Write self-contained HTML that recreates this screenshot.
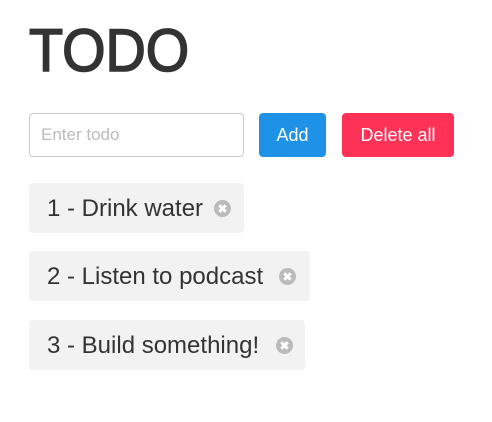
<!DOCTYPE html>
<html><head><style>
body{margin:0;background:#fff;font-family:"Liberation Sans",sans-serif;width:492px;height:422px;position:relative;overflow:hidden}
h1{position:absolute;left:29px;top:18px;margin:0;font-size:60px;font-weight:normal;-webkit-text-stroke:1.6px #333;color:#333;line-height:66px;transform:scaleX(0.93);transform-origin:0 0}
.in{position:absolute;left:29px;top:113px;width:213px;height:42px;border:1px solid #ccc;border-radius:4px;box-sizing:content-box}
.in span{position:absolute;left:11px;top:11px;font-size:17px;color:#bbb}
.btn{position:absolute;top:113px;height:44px;border-radius:4px;color:#fff;font-size:18px;line-height:44px;text-align:center}
.item{position:absolute;left:29px;height:50px;background:#f2f2f2;border-radius:4px;font-size:24px;color:#333;line-height:51px;padding-left:18px;box-sizing:border-box;white-space:nowrap}
.x{position:absolute;top:17px;width:17px;height:17px;border-radius:50%;background:#bbb}
.x:before,.x:after{content:"";position:absolute;left:4px;top:7px;width:9px;height:3px;background:#fff;transform:rotate(45deg)}
.x:after{transform:rotate(-45deg)}
</style></head><body>
<h1>TODO</h1>
<div class="in"><span>Enter todo</span></div>
<div class="btn" style="left:259px;width:67px;background:#1e92e6">Add</div>
<div class="btn" style="left:342px;width:112px;background:#fe3157">Delete all</div>
<div class="item" style="top:183px;width:215px">1 - Drink water<div class="x" style="left:185px"></div></div>
<div class="item" style="top:251px;width:281px">2 - Listen to podcast<div class="x" style="left:250px"></div></div>
<div class="item" style="top:320px;width:276px">3 - Build something!<div class="x" style="left:247px"></div></div>
</body></html>
